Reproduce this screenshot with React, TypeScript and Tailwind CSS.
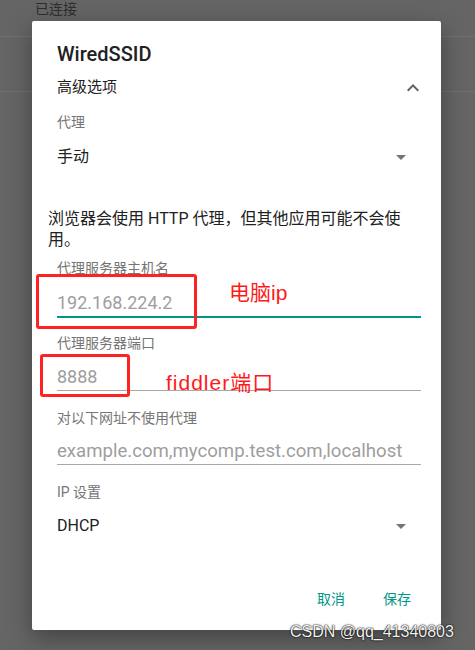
import React from "react";

const DropArrow = () => (
  <svg width="24" height="24" viewBox="0 0 24 24" className="fill-[#757575]">
    <path d="M7 10l5 5 5-5z" />
  </svg>
);

const ChevronUp = () => (
  <svg width="24" height="24" viewBox="0 0 24 24" className="fill-[#616161]">
    <path d="M12 8l-6 6 1.41 1.41L12 10.83l4.59 4.58L18 14z" />
  </svg>
);

export default function App() {
  return (
    <div className="relative w-[475px] h-[650px] overflow-hidden bg-[#656565] font-['Roboto','Noto_Sans_CJK_SC',sans-serif]">
      {/* list behind the scrim */}
      <div className="h-[36px] pl-[35px] text-[14px] leading-[18px] text-[#2e2e2e]">已连接</div>
      <div className="h-px bg-[#707070]" />
      <div className="h-[54px]" />
      <div className="h-px bg-[#707070]" />

      {/* dialog */}
      <div className="absolute left-[32px] top-[21px] w-[409px] h-[609px] bg-white rounded-[2px] shadow-[0_8px_24px_rgba(0,0,0,0.35)]">
        <div className="pt-[19px]">
          <div className="h-[28px] pl-[25px] text-[20px] leading-[28px] font-medium text-[#212121]">WiredSSID</div>
          <div className="h-[39px] pl-[25px] pr-[16px] flex items-center justify-between text-[15px] text-[#212121]">
            <span>高级选项</span>
            <ChevronUp />
          </div>
          <div className="h-[31px] pl-[25px] text-[14px] leading-[31px] text-[#757575]">代理</div>
          <div className="h-[37px] pl-[25px] pr-[28px] flex items-center justify-between text-[16px] text-[#212121]">
            <span>手动</span>
            <DropArrow />
          </div>

          <p className="mt-[33px] pl-[16px] text-[16px] leading-[21px] text-[#212121]">
            浏览器会使用 HTTP 代理，但其他应用可能不会使
            <br />
            用。
          </p>

          <div className="pl-[25px] pr-[20px]">
            <div className="h-[36px] text-[14px] leading-[36px] text-[#757575]">代理服务器主机名</div>
            <div className="h-[30px] pt-[4px] text-[18px] leading-[26px] text-[#9e9e9e]">192.168.224.2</div>
            <div className="h-[2px] bg-[#009688]" />

            <div className="mt-[12px] h-[27px] text-[14px] leading-[27px] text-[#757575]">代理服务器端口</div>
            <div className="h-[33px] pt-[7px] text-[18px] leading-[26px] text-[#9e9e9e]">8888</div>
            <div className="h-px bg-[#a8a8a8]" />

            <div className="mt-[13px] h-[28px] text-[14px] leading-[28px] text-[#757575]">对以下网址不使用代理</div>
            <div className="h-[32px] pt-[6px] text-[18.6px] leading-[26px] text-[#9e9e9e] whitespace-nowrap">
              example.com,mycomp.test.com,localhost
            </div>
            <div className="h-px bg-[#a8a8a8]" />

            <div className="mt-[13px] h-[29px] text-[14px] leading-[29px] text-[#757575]">IP 设置</div>
          </div>
          <div className="h-[38px] pl-[25px] pr-[28px] flex items-center justify-between text-[16px] text-[#212121]">
            <span>DHCP</span>
            <DropArrow />
          </div>

          <div className="mt-[40px] h-[29px] pr-[30px] flex justify-end gap-[38px] text-[14px] leading-[29px] text-[#009688]">
            <button>取消</button>
            <button>保存</button>
          </div>
        </div>
      </div>

      {/* red annotations */}
      <div className="absolute left-[36px] top-[274px] w-[161px] h-[55px] border-[3px] border-[#ff2222] rounded-[3px]" />
      <div className="absolute left-[40px] top-[354px] w-[90px] h-[43px] border-[3px] border-[#ff2222] rounded-[3px]" />
      <div className="absolute left-[229px] top-[281px] text-[21px] leading-[24px] text-[#ff1a1a] font-['Liberation_Sans','Noto_Sans_CJK_SC',sans-serif]">
        电脑ip
      </div>
      <div className="absolute left-[166px] top-[371px] text-[21px] leading-[24px] tracking-[1px] text-[#ff1a1a] font-['Liberation_Sans','Noto_Sans_CJK_SC',sans-serif]">
        fiddler端口
      </div>

      {/* watermark */}
      <div className="absolute left-[290px] top-[622px] text-[16px] leading-[20px] text-[#f2f2f2] font-['Liberation_Sans',sans-serif] [text-shadow:0_0_2px_#000,0_0_1px_#000]">
        CSDN @qq_41340803
      </div>
    </div>
  );
}
